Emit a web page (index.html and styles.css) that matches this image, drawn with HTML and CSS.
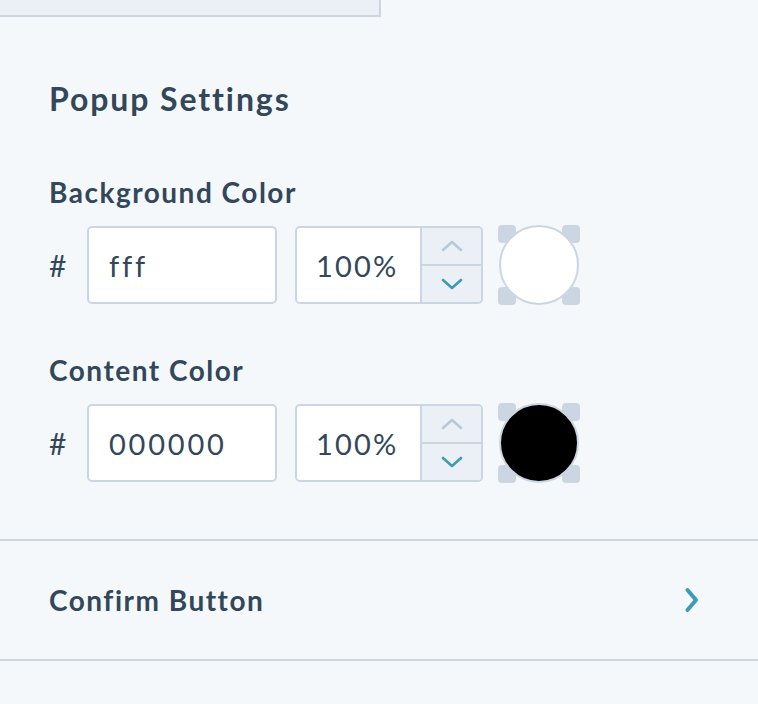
FILE: index.html
```html
<!DOCTYPE html>
<html>
<head>
<meta charset="utf-8">
<link rel="stylesheet" href="styles.css">
</head>
<body>
<div class="top-box"></div>
<section class="settings">
  <h2 class="heading">Popup Settings</h2>
  <div class="field field-first">
    <div class="label">Background Color</div>
    <div class="row">
      <span class="hash">#</span>
      <div class="hex-input">fff</div>
      <div class="pct-group">
        <div class="pct-value">100%</div>
        <div class="stepper">
          <div class="step step-up"><svg width="24" height="14" viewBox="0 0 24 14"><path d="M3 11 L12 3 L21 11" fill="none" stroke="#b9c8d8" stroke-width="2.6" stroke-linecap="round" stroke-linejoin="round"/></svg></div>
          <div class="step step-down"><svg width="24" height="14" viewBox="0 0 24 14"><path d="M3 3 L12 11 L21 3" fill="none" stroke="#3e9bb3" stroke-width="2.6" stroke-linecap="round" stroke-linejoin="round"/></svg></div>
        </div>
      </div>
      <div class="swatch">
        <span class="corner tl"></span><span class="corner tr"></span><span class="corner bl"></span><span class="corner br"></span>
        <span class="circle white"></span>
      </div>
    </div>
  </div>
  <div class="field field-second">
    <div class="label">Content Color</div>
    <div class="row">
      <span class="hash">#</span>
      <div class="hex-input">000000</div>
      <div class="pct-group">
        <div class="pct-value">100%</div>
        <div class="stepper">
          <div class="step step-up"><svg width="24" height="14" viewBox="0 0 24 14"><path d="M3 11 L12 3 L21 11" fill="none" stroke="#b9c8d8" stroke-width="2.6" stroke-linecap="round" stroke-linejoin="round"/></svg></div>
          <div class="step step-down"><svg width="24" height="14" viewBox="0 0 24 14"><path d="M3 3 L12 11 L21 3" fill="none" stroke="#3e9bb3" stroke-width="2.6" stroke-linecap="round" stroke-linejoin="round"/></svg></div>
        </div>
      </div>
      <div class="swatch">
        <span class="corner tl"></span><span class="corner tr"></span><span class="corner bl"></span><span class="corner br"></span>
        <span class="circle black"></span>
      </div>
    </div>
  </div>
</section>
<div class="accordion">
  <span class="acc-title">Confirm Button</span>
  <svg class="acc-chevron" width="16" height="26" viewBox="0 0 16 26"><path d="M3.5 3 L12 13 L3.5 23" fill="none" stroke="#3e9bb3" stroke-width="4" stroke-linecap="round" stroke-linejoin="round"/></svg>
</div>
</body>
</html>
```
FILE: styles.css
```css
* { box-sizing: border-box; }
html, body { margin: 0; padding: 0; }
body {
  background: #f5f8fa;
  font-family: "Lato", "Liberation Sans", sans-serif;
  color: #33475b;
  width: 758px;
  height: 704px;
  overflow: hidden;
}
.top-box {
  width: 381px;
  height: 17px;
  background: #eaf0f6;
  border-right: 2px solid #cbd6e2;
  border-bottom: 2px solid #cbd6e2;
}
.settings {
  padding: 0 0 0 49px;
}
.heading {
  margin: 0;
  padding-top: 62px;
  font-size: 32px;
  line-height: 40px;
  font-weight: 700;
  letter-spacing: 1.9px;
}
.field { display: flex; flex-direction: column; }
.label {
  font-size: 28px;
  font-weight: 700;
  line-height: 34px;
  letter-spacing: 1.5px;
}
.field-first .label { margin-top: 56px; }
.field-second .label { margin-top: 48px; }
.row {
  display: flex;
  align-items: center;
  margin-top: 16px;
  height: 80px;
}
.hash {
  width: 38px;
  font-size: 30px;
  font-weight: 400;
  letter-spacing: 0;
}
.hex-input {
  width: 190px;
  height: 78px;
  background: #fff;
  border: 2px solid #cbd6e2;
  border-radius: 5px;
  padding-left: 20px;
  display: flex;
  align-items: center;
  font-size: 29px;
  letter-spacing: 2.8px;
}
.pct-group {
  margin-left: 18px;
  width: 188px;
  height: 78px;
  display: flex;
  border: 2px solid #cbd6e2;
  border-radius: 5px;
  overflow: hidden;
}
.pct-value {
  flex: 1;
  background: #fff;
  display: flex;
  align-items: center;
  padding-left: 19px;
  font-size: 29px;
  letter-spacing: 2.2px;
  border-right: 2px solid #cbd6e2;
}
.stepper {
  width: 59px;
  display: flex;
  flex-direction: column;
  background: #eaf0f6;
}
.step {
  flex: 1;
  display: flex;
  align-items: center;
  justify-content: center;
}
.step-up { border-bottom: 2px solid #cbd6e2; }
.swatch {
  position: relative;
  margin-left: 15px;
  width: 82px;
  height: 80px;
}
.corner {
  position: absolute;
  width: 18px;
  height: 18px;
  background: #cbd6e2;
  border-radius: 4px;
}
.tl { left: 0; top: 0; }
.tr { right: 0; top: 0; }
.bl { left: 0; bottom: 0; }
.br { right: 0; bottom: 0; }
.circle {
  position: absolute;
  left: 1px;
  top: 0;
  width: 80px;
  height: 80px;
  border-radius: 50%;
  border: 2px solid #cbd6e2;
}
.circle.white { background: #fff; }
.circle.black { background: #000; }
.accordion {
  margin-top: 56px;
  height: 122px;
  border-top: 2px solid #cbd6e2;
  border-bottom: 2px solid #cbd6e2;
  display: flex;
  align-items: center;
  justify-content: space-between;
  padding: 0 58px 0 49px;
}
.acc-title {
  font-size: 28px;
  font-weight: 700;
  letter-spacing: 1.5px;
}
.acc-chevron { display: block; }
```
